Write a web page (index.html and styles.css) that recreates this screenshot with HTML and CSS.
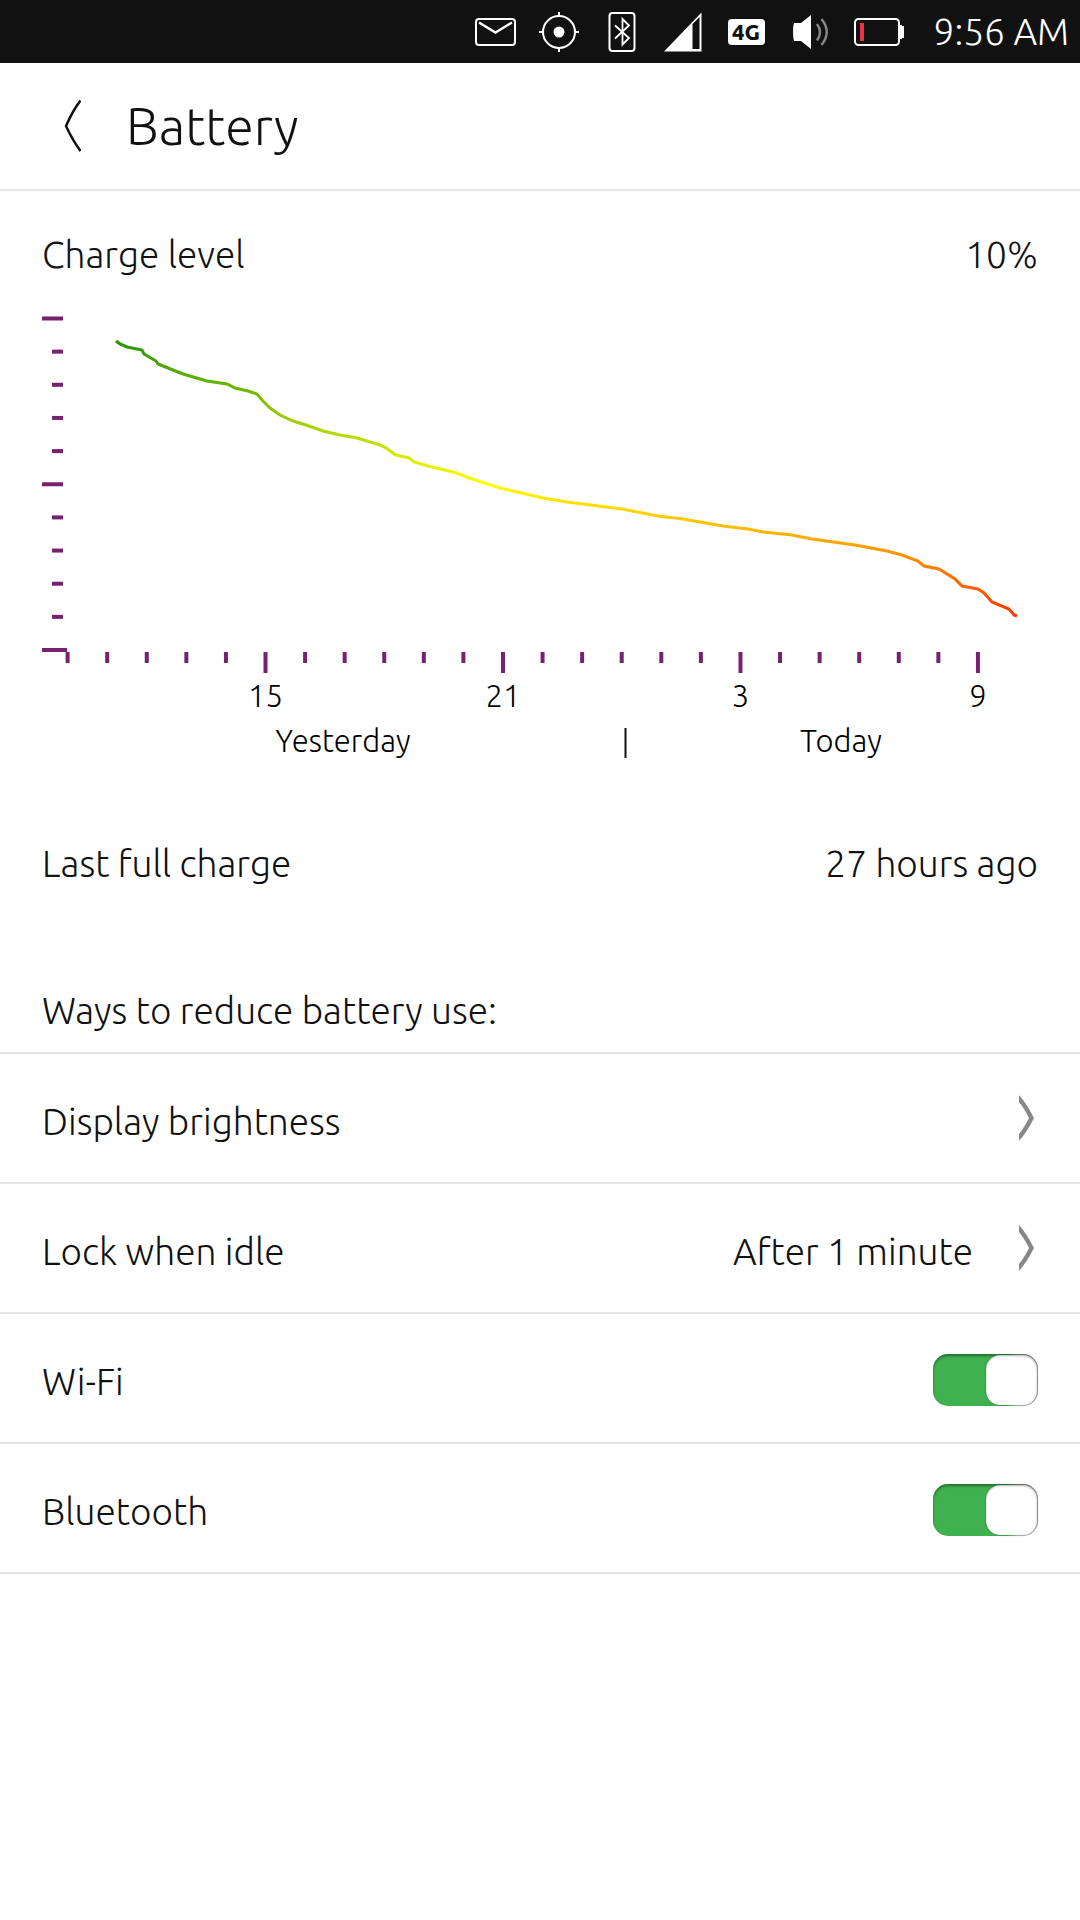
FILE: index.html
```html
<!DOCTYPE html>
<html lang="en">
<head>
<meta charset="UTF-8" />
<title>Battery</title>
<meta name="viewport" content="width=device-width, initial-scale=1" />
<link rel="stylesheet" href="styles.css">
</head>
<body>

<div class="status-bar">
  <svg class="indicator" viewBox="0 0 42 40" aria-label="Messages">
    <rect x="1" y="7" width="39" height="26" rx="3" fill="none" stroke="#fff" stroke-width="2" />
    <path d="M4 10.500 L20.500 20.500 L37 10.500" fill="none" stroke="#fff" stroke-width="2.400" />
  </svg>
  <svg class="indicator" viewBox="0 0 42 40" aria-label="Location">
    <circle cx="21" cy="20" r="16" fill="none" stroke="#fff" stroke-width="2" />
    <circle cx="21" cy="20" r="5.500" fill="#fff" />
    <path d="M21 0 V4 M21 36 V40 M1 20 H5 M37 20 H41" stroke="#fff" stroke-width="2" />
  </svg>
  <svg class="indicator" viewBox="0 0 42 40" aria-label="Bluetooth">
    <rect x="8.500" y="1" width="25" height="38" rx="3" fill="none" stroke="#fff" stroke-width="2" />
    <path d="M14 13.500 L28 26 L21.500 32.500 V7 L28 13.500 L14 26.500" fill="none" stroke="#fff" stroke-width="1.800" />
  </svg>
  <svg class="indicator" viewBox="0 0 42 40" aria-label="Signal">
    <path d="M0 39.500 L37.500 0.500 V39.500 Z M28.500 12 V37 H35.500 V5 Z" fill="#fff" fill-rule="evenodd" />
  </svg>
  <svg class="indicator" viewBox="0 0 42 40" aria-label="Network">
    <rect x="1" y="7" width="37" height="26" rx="4" fill="#fff" />
    <text class="network" x="19" y="28">4G</text>
  </svg>
  <svg class="indicator" viewBox="0 0 42 40" aria-label="Sound">
    <path d="M4 11 H11 L21 3 V37 L11 29 H4 Q3 26 3 20 Q3 14 4 11 Z" fill="#fff" />
    <path d="M27 12 Q33 20 27 28.500 M31.500 7 Q42 20 31.500 33" fill="none" stroke="#888" stroke-width="2.400" />
  </svg>
  <svg class="indicator indicator-battery" viewBox="0 0 52 40" aria-label="Battery">
    <rect x="2" y="7" width="44" height="26" rx="3.500" fill="none" stroke="#fff" stroke-width="2" />
    <path d="M47 13 H49 V14 H51 V26 H49 V27 H47 Z" fill="#fff" />
    <rect x="7" y="11" width="4" height="18" fill="#ed3146" />
  </svg>
  <time class="clock">9:56 AM</time>
</div>

<header class="header">
  <button type="button" class="back" aria-label="Back">
    <svg viewBox="0 0 17 52">
      <path d="M16.500 0.500 Q9 10 2 26 Q9 41 16.500 51" fill="none" stroke="#111" stroke-width="2.500" />
    </svg>
  </button>
  <h1>Battery</h1>
</header>

<main>
  <div class="info charge-level">
    <span>Charge level</span>
    <span>10%</span>
  </div>

  <svg class="chart" viewBox="0 0 996 444" aria-label="Charge level over the last day">
    <defs>
      <linearGradient id="level" gradientUnits="userSpaceOnUse" x1="0" y1="0" x2="0" y2="333">
        <stop offset="0" stop-color="#008000" />
        <stop offset="0.5" stop-color="#ffff00" />
        <stop offset="1" stop-color="#ff0000" />
      </linearGradient>
    </defs>
    <g id="ticks"></g>
    <polyline class="curve" points="74,24 78,27 85,30 100,33 102,37 114,44 116,47 141,57 165,64 185,67 193,71 206,74 215,77 220,83 228,91 238,98 251,104 264,108 281,114 298,118 315,121 338,128 344,131 354,138 367,141 372,145 386,149 411,155 420,158 427,161 458,171 501,181 525,185 580,192 616,199 641,202 681,209 706,212 721,215 750,218 770,222 813,228 845,234 860,238 876,244 882,249 897,252 913,262 920,269 936,272 942,276 950,285 967,292 972,298 975,299" />
    <text class="day" x="301" y="435">Yesterday</text>
    <path d="M583.500 411 V441" stroke="#111" stroke-width="2" />
    <text class="day" x="799" y="435">Today</text>
  </svg>

  <div class="info last-charge">
    <span>Last full charge</span>
    <span>27 hours ago</span>
  </div>

  <h2>Ways to reduce battery use:</h2>

  <div class="settings">
    <a class="row" href="#brightness">
      <span>Display brightness</span>
      <svg class="chevron" viewBox="0 0 15 46"><path d="M0 0 Q8 9 15 23 Q8 37 0 46 V39 Q5 33 10 23 Q5 13 0 7 Z" fill="#888" /></svg>
    </a>
    <a class="row" href="#lock">
      <span>Lock when idle</span>
      <span class="value">After 1 minute</span>
      <svg class="chevron" viewBox="0 0 15 46"><path d="M0 0 Q8 9 15 23 Q8 37 0 46 V39 Q5 33 10 23 Q5 13 0 7 Z" fill="#888" /></svg>
    </a>
    <div class="row">
      <label for="wifi">Wi-Fi</label>
      <input type="checkbox" class="switch" id="wifi" checked />
    </div>
    <div class="row">
      <label for="bluetooth">Bluetooth</label>
      <input type="checkbox" class="switch" id="bluetooth" checked />
    </div>
  </div>
</main>

<script>
const svgNS = 'http://www.w3.org/2000/svg';
const ticks = document.getElementById('ticks');
const axisY = 333;
const originX = 25;
const hourWidth = 39.58;
const firstHour = 10;

function addTick(d) {
  const path = document.createElementNS(svgNS, 'path');
  path.setAttribute('d', d);
  path.setAttribute('class', 'tick');
  ticks.appendChild(path);
}

// charge axis, one tick every 10%
for (let i = 0; i <= 10; i++) {
  const y = 1.5 + i * 33.15;
  const from = i % 5 === 0 ? 0 : 10;
  addTick(`M${from} ${y} H${i === 10 ? 25 : 21}`);
}

// time axis, one tick an hour and a label every six
for (let i = 0; i < 24; i++) {
  const x = originX + 0.6 + i * hourWidth;
  const hour = (firstHour + i) % 24;
  const major = hour % 6 === 3;
  addTick(`M${x} 335 V${major ? 356 : 346}`);
  if (major) {
    const label = document.createElementNS(svgNS, 'text');
    label.setAttribute('class', 'hour');
    label.setAttribute('x', x);
    label.setAttribute('y', axisY + 57);
    label.textContent = hour;
    ticks.appendChild(label);
  }
}
</script>

</body>
</html>
```
FILE: styles.css
```css
* {
  box-sizing: border-box;
}
body {
  margin: 0;
  background: #fff;
  color: #111;
  font-family: Ubuntu, "Open Sans", "Noto Sans", sans-serif;
  font-size: 37px;
  font-weight: 300;
  line-height: 48px;
}
.status-bar {
  display: flex;
  align-items: center;
  justify-content: flex-end;
  gap: 21px;
  height: 63px;
  padding-right: 11px;
  background: #111;
  color: #fff;
}
.indicator {
  width: 42px;
  height: 40px;
  flex: none;
}
.indicator-battery {
  width: 52px;
}
.network {
  fill: #111;
  font-size: 22px;
  font-weight: 800;
  text-anchor: middle;
}
.clock {
  min-width: 143px;
  text-align: right;
}
.header {
  display: flex;
  align-items: center;
  height: 128px;
  padding-left: 42px;
  border-bottom: 2px solid #e5e5e5;
}
.back {
  width: 84px;
  height: 84px;
  padding: 0 0 0 22px;
  border: none;
  background: none;
  text-align: left;
  cursor: pointer;
}
.back svg {
  display: block;
  width: 17px;
  height: 52px;
}
h1 {
  margin: 0;
  font-size: 52px;
  font-weight: 300;
  line-height: 62px;
}
.info {
  display: flex;
  justify-content: space-between;
  padding: 0 42px;
}
.charge-level {
  padding-top: 40px;
}
.chart {
  display: block;
  width: calc(100% - 84px);
  margin: 38px 42px 0;
  overflow: visible;
}
.tick {
  stroke: #77216f;
  stroke-width: 4;
}
.curve {
  fill: none;
  stroke: url(#level);
  stroke-width: 3;
}
.hour, .day {
  fill: #000;
  font-size: 31px;
  text-anchor: middle;
}
.last-charge {
  padding-top: 79px;
}
h2 {
  margin: 99px 42px 17px;
  font-size: 37px;
  font-weight: 300;
  line-height: 48px;
}
.settings {
  border-top: 2px solid #e5e5e5;
}
.row {
  display: flex;
  align-items: center;
  justify-content: space-between;
  height: 130px;
  padding: 0 42px;
  border-bottom: 2px solid #e5e5e5;
  color: #111;
  text-decoration: none;
}
.row span, .row label {
  padding-top: 8px;
}
.value {
  margin-left: auto;
}
.chevron {
  width: 15px;
  height: 46px;
  margin: 0 4px 0 46px;
}
.switch {
  appearance: none;
  width: 105px;
  height: 52px;
  margin: 4px 0 0;
  border-radius: 15px;
  background: #888;
  box-shadow: inset 0 2px 3px rgba(0,0,0,0.4);
  cursor: pointer;
}
.switch:checked {
  background: linear-gradient(90deg, #3fb24f 70%, #b5c4b7 80%);
}
.switch::before {
  content: "";
  display: block;
  width: 51px;
  height: 50px;
  margin: 1px;
  border-radius: 14px;
  background: #fff;
  box-shadow: 0 0 2px rgba(0,0,0,0.4), inset 0 1px 2px rgba(0,0,0,0.3);
}
.switch:checked::before {
  margin-left: 53px;
}
```
